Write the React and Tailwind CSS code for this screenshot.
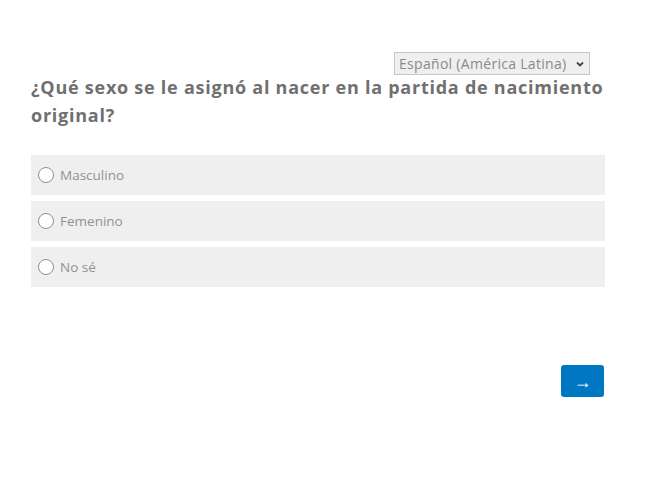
import { useState } from 'react';

const options = ['Masculino', 'Femenino', 'No sé'];

export default function App() {
    const [selected, setSelected] = useState(null);

    return (
        <div className="w-[658px] h-[488px] bg-white font-['Open_Sans',sans-serif]">
            <div className="pl-[31px] pr-[53px] pt-[52px]">
                <div className="flex justify-end pr-[15px]">
                    <div className="flex items-center h-[23px] w-[196px] border border-[#c8c8c8] bg-[#efefef] pl-[4px] pr-[4px] text-[14px] tracking-[0.3px] text-[#8a8a8a]">
                        <span className="flex-1 truncate">Español (América Latina)</span>
                        <svg width="10" height="10" viewBox="0 0 10 10" className="shrink-0">
                            <path d="M2 3.5 L5 6.5 L8 3.5" fill="none" stroke="#444" strokeWidth="1.8" />
                        </svg>
                    </div>
                </div>
                <h1 className="-mt-[2px] text-[18px] leading-[28px] font-bold text-[#707070] tracking-[0.75px]">
                    ¿Qué sexo se le asignó al nacer en la partida de nacimiento original?
                </h1>
                <div className="mt-[26px] flex flex-col gap-[6px]">
                    {options.map((opt, i) => (
                        <label key={opt} onClick={() => setSelected(i)}
                            className="flex items-center h-[40px] bg-[#efefef] pl-[7px] cursor-pointer">
                            <span className="w-[16px] h-[16px] rounded-full border border-[#8f8f8f] bg-white flex items-center justify-center">
                                {selected === i && <span className="w-[8px] h-[8px] rounded-full bg-[#555]" />}
                            </span>
                            <span className="ml-[6px] text-[13.5px] text-[#929292]">{opt}</span>
                        </label>
                    ))}
                </div>
                <div className="mt-[78px] flex justify-end pr-[1px]">
                    <button className="w-[43px] h-[32px] rounded-[3px] bg-[#0077c2] text-white text-[18px] flex items-center justify-center">
                        →
                    </button>
                </div>
            </div>
        </div>
    );
}
